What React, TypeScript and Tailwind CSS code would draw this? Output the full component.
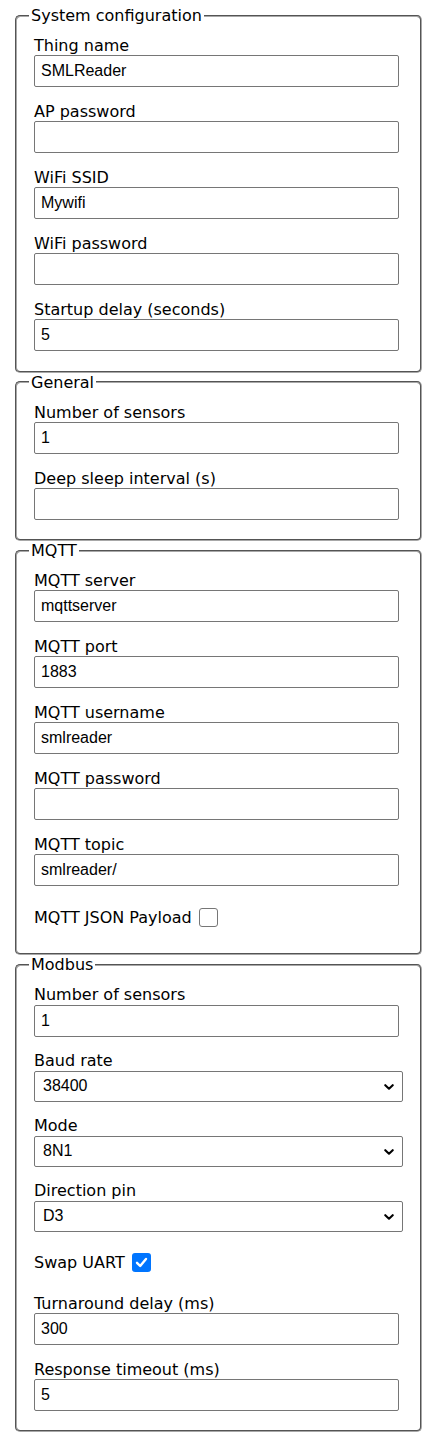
import React from "react";

type Field =
  | { kind: "text"; label: string; value?: string }
  | { kind: "select"; label: string; value: string }
  | { kind: "check"; label: string; checked: boolean };

type Group = { title: string; fields: Field[] };

const groups: Group[] = [
  {
    title: "System configuration",
    fields: [
      { kind: "text", label: "Thing name", value: "SMLReader" },
      { kind: "text", label: "AP password" },
      { kind: "text", label: "WiFi SSID", value: "Mywifi" },
      { kind: "text", label: "WiFi password" },
      { kind: "text", label: "Startup delay (seconds)", value: "5" },
    ],
  },
  {
    title: "General",
    fields: [
      { kind: "text", label: "Number of sensors", value: "1" },
      { kind: "text", label: "Deep sleep interval (s)" },
    ],
  },
  {
    title: "MQTT",
    fields: [
      { kind: "text", label: "MQTT server", value: "mqttserver" },
      { kind: "text", label: "MQTT port", value: "1883" },
      { kind: "text", label: "MQTT username", value: "smlreader" },
      { kind: "text", label: "MQTT password" },
      { kind: "text", label: "MQTT topic", value: "smlreader/" },
      { kind: "check", label: "MQTT JSON Payload", checked: false },
    ],
  },
  {
    title: "Modbus",
    fields: [
      { kind: "text", label: "Number of sensors", value: "1" },
      { kind: "select", label: "Baud rate", value: "38400" },
      { kind: "select", label: "Mode", value: "8N1" },
      { kind: "select", label: "Direction pin", value: "D3" },
      { kind: "check", label: "Swap UART", checked: true },
      { kind: "text", label: "Turnaround delay (ms)", value: "300" },
      { kind: "text", label: "Response timeout (ms)", value: "5" },
    ],
  },
];

function Checkbox({ checked }: { checked: boolean }) {
  if (checked) {
    return (
      <span className="flex h-[19px] w-[19px] items-center justify-center rounded-[3px] bg-[#0075ff]">
        <svg width="13" height="13" viewBox="0 0 13 13" fill="none">
          <path d="M2 6.8 L5.2 10 L11 3" stroke="#fff" strokeWidth="2.4" strokeLinecap="round" strokeLinejoin="round" />
        </svg>
      </span>
    );
  }
  return <span className="block h-[19px] w-[19px] rounded-[3px] border-[1.5px] border-[#767676] bg-white" />;
}

function FieldRow({ field }: { field: Field }) {
  if (field.kind === "check") {
    return (
      <div className="mt-[7px] mb-[21.3px] flex h-[19.4px] items-center gap-[7px] leading-[19.4px]">
        <span>{field.label}</span>
        <Checkbox checked={field.checked} />
      </div>
    );
  }
  return (
    <div className="mb-[14.6px]">
      <label className="block leading-[19.4px]">{field.label}</label>
      {field.kind === "text" ? (
        <input
          type="text"
          defaultValue={field.value ?? ""}
          className="block h-[32px] w-[365px] rounded-[2px] border border-[#767676] bg-white px-[6px] font-['Liberation_Sans',Arial,sans-serif] text-[16px] text-black outline-none"
        />
      ) : (
        <div className="relative w-[369px]">
          <select
            defaultValue={field.value}
            className="block h-[31px] w-full appearance-none rounded-[2px] border border-[#767676] bg-white pl-[8px] font-['Liberation_Sans',Arial,sans-serif] text-[16px] text-black outline-none"
          >
            <option value={field.value}>{field.value}</option>
          </select>
          <svg
            className="pointer-events-none absolute right-[9px] top-[13px]"
            width="10"
            height="6"
            viewBox="0 0 10 6"
            fill="none"
          >
            <path d="M1.3 1.2 L5 4.7 L8.7 1.2" stroke="#000" strokeWidth="2.1" strokeLinecap="round" strokeLinejoin="round" />
          </svg>
        </div>
      )}
    </div>
  );
}

export default function App() {
  return (
    <div className="min-h-[1436px] bg-white pl-[15px] pt-[6px] font-['DejaVu_Sans',Verdana,sans-serif] text-[16px] text-black">
      {groups.map((g) => (
        <fieldset
          key={g.title}
          className="w-[407px] rounded-[5px] border-2 border-[#a8a8a8] px-[12px] pt-[10.6px] pb-[4.5px] [border-style:groove]"
        >
          <legend className="px-[2px] leading-[19.4px]">{g.title}</legend>
          <div className="flex flex-col px-[5px]">
            {g.fields.map((f) => (
              <FieldRow key={f.label} field={f} />
            ))}
          </div>
        </fieldset>
      ))}
    </div>
  );
}
